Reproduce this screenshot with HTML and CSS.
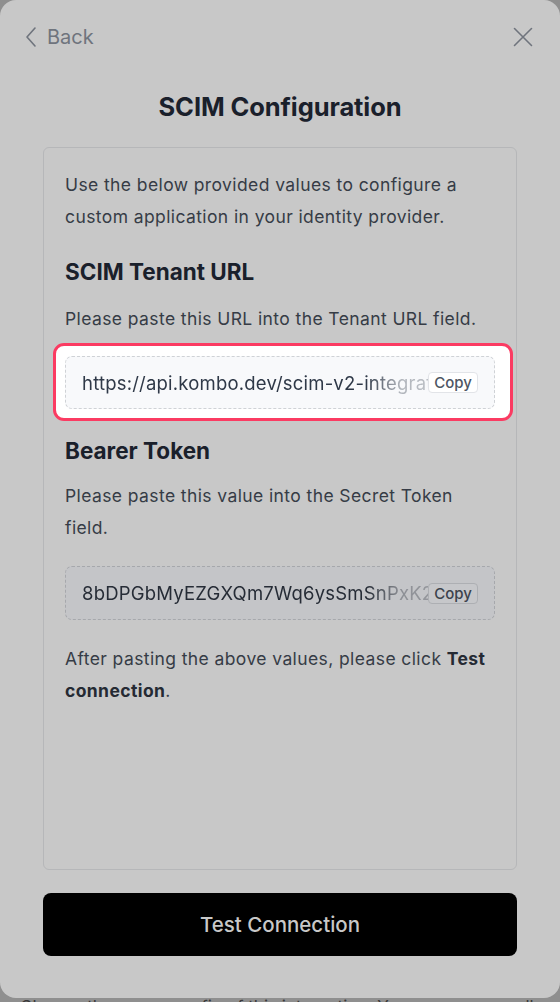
FILE: index.html
```html
<!DOCTYPE html>
<html lang="en">
<head>
<meta charset="utf-8">
<title>SCIM Configuration</title>
<link rel="stylesheet" href="styles.css">
</head>
<body>
<div class="modal">
  <div class="topbar">
    <button class="back">
      <svg class="chev" width="14" height="22" viewBox="0 0 14 22"><path d="M11 2 L3 11 L11 20" fill="none" stroke="currentColor" stroke-width="1.6" stroke-linecap="round" stroke-linejoin="round"/></svg>
      <span>Back</span>
    </button>
    <button class="close">
      <svg width="20" height="20" viewBox="0 0 20 20"><path d="M1.5 1.5 L18.5 18.5 M18.5 1.5 L1.5 18.5" fill="none" stroke="currentColor" stroke-width="1.6" stroke-linecap="round"/></svg>
    </button>
  </div>
  <h1 class="title">SCIM Configuration</h1>
  <div class="card">
    <p class="text">Use the below provided values to configure a custom application in your identity provider.</p>
    <h2 class="heading first">SCIM Tenant URL</h2>
    <p class="text p2">Please paste this URL into the Tenant URL field.</p>
    <div class="spotlight">
      <div class="field light">
        <span class="value">https://api.kombo.dev/scim-v2-integration/tenant</span>
        <span class="copy">Copy</span>
      </div>
    </div>
    <h2 class="heading second">Bearer Token</h2>
    <p class="text p3">Please paste this value into the Secret Token field.</p>
    <div class="field dim">
      <span class="value">8bDPGbMyEZGXQm7Wq6ysSmSnPxK2v9</span>
      <span class="copy">Copy</span>
    </div>
    <p class="text p4">After pasting the above values, please click <b>Test connection</b>.</p>
  </div>
  <button class="test">Test Connection</button>
</div>
<p class="behind">Change the scope config of this integration. You can manage all</p>
</body>
</html>
```

FILE: styles.css
```css
* { box-sizing: border-box; }
html, body { margin: 0; padding: 0; }
body {
  background: #8f8f8f;
  font-family: Inter, "Liberation Sans", sans-serif;
  width: 560px;
  height: 1002px;
  overflow: hidden;
}
.modal {
  position: relative;
  z-index: 1;
  height: 998px;
  background: #c8c8c8;
  border-radius: 16px;
  display: flex;
  flex-direction: column;
  padding: 0 43px 42px;
}
.topbar {
  display: flex;
  justify-content: space-between;
  align-items: center;
  height: 28px;
  margin: 23px -16px 0 -19px;
}
.back, .close {
  background: none;
  border: 0;
  padding: 0;
  color: #6f747d;
  display: flex;
  align-items: center;
  font-family: inherit;
  cursor: pointer;
}
.back span {
  font-size: 20px;
  margin-left: 9px;
}
.title {
  margin: 41px 0 0;
  text-align: center;
  font-size: 25.5px;
  font-weight: 700;
  line-height: 30px;
  color: #1a202b;
  letter-spacing: -0.1px;
}
.card {
  margin-top: 25px;
  flex: 1;
  border: 1px solid #b6b7b9;
  border-radius: 6px;
  padding: 21px 21px;
}
.text {
  margin: 0;
  font-size: 17.5px;
  line-height: 32px;
  letter-spacing: 0.4px;
  color: #363c46;
}
.text b { font-weight: 700; color: #252a33; }
.heading {
  margin: 0;
  font-size: 22.5px;
  line-height: 30px;
  font-weight: 700;
  color: #1a202b;
}
.heading.first { margin-top: 24px; }
.p2 { margin-top: 16px; }
.spotlight {
  margin: 8px -18px 0 -12px;
  padding: 10px 15px 9px 9px;
  border: 3px solid #fb3b62;
  border-radius: 11px;
  background: #ffffff;
}
.heading.second { margin-top: 15px; }
.p3 { margin-top: 14px; }
.field {
  position: relative;
  height: 54px;
  border: 1px dashed #cfd2d6;
  border-radius: 7px;
  display: flex;
  align-items: center;
  padding: 0 16px;
  overflow: hidden;
}
.field.light { background: #f8f9fb; height: 53px; }
.field.dim { margin-top: 22px; background: #c4c5c8; border-color: #a6a8ac; }
.value {
  flex: 1;
  white-space: nowrap;
  overflow: hidden;
  font-size: 18.5px;
  letter-spacing: 0.2px;
  -webkit-mask-image: linear-gradient(to right, #000 82%, rgba(0,0,0,0.35) 92%, rgba(0,0,0,0.3) 100%);
  mask-image: linear-gradient(to right, #000 82%, rgba(0,0,0,0.35) 92%, rgba(0,0,0,0.3) 100%);
}
.light .value { color: #2f3948; }
.dim .value { color: #262c36; }
.copy {
  flex: none;
  font-size: 15px;
  font-weight: 500;
  line-height: 19px;
  padding: 0 5px;
  border-radius: 4px;
}
.light .copy { color: #4d5563; background: #fff; border: 1px solid #e2e4e8; }
.dim .copy { color: #3c424c; background: #c6c7ca; border: 1px solid #adafb3; }
.p4 { margin-top: 23px; }
.test {
  margin-top: 23px;
  height: 63px;
  border: 0;
  border-radius: 8px;
  background: #000;
  color: #c8c8c8;
  font-family: inherit;
  font-size: 20.5px;
  font-weight: 500;
  cursor: pointer;
}
.behind {
  margin: -3px 0 0 20px;
  font-size: 17px;
  line-height: 24px;
  color: #3a3a3a;
  white-space: nowrap;
}
```
